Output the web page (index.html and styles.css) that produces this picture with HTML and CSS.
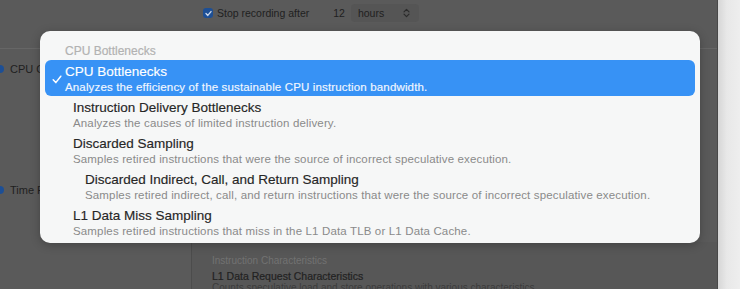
FILE: index.html
```html
<!DOCTYPE html>
<html lang="en">
<head>
    <meta charset="UTF-8">
    <meta name="viewport" content="width=device-width, initial-scale=1.0">
    <title>Recording Options</title>
    <link rel="stylesheet" href="styles.css">
</head>
<body>
    <div class="window">
        <div class="main">
            <!-- Toolbar behind the menu -->
            <div class="toolbar">
                <span class="check-box">
                    <svg width="9" height="9" viewBox="0 0 9 9"><path d="M2 4.6 L3.8 6.4 L7 2.6" fill="none" stroke="#c9d6ea" stroke-width="1.4" stroke-linecap="round" stroke-linejoin="round"/></svg>
                </span>
                <span class="toolbar-label">Stop recording after</span>
                <span class="toolbar-value">12</span>
                <span class="unit-select">
                    hours
                    <svg width="7" height="10" viewBox="0 0 7 10"><path d="M1 3.8 L3.5 1.3 L6 3.8 M1 6.2 L3.5 8.7 L6 6.2" fill="none" stroke="#2a2a2a" stroke-width="1.2" stroke-linecap="round" stroke-linejoin="round"/></svg>
                </span>
            </div>

            <div class="content">
                <div class="options">
                    <div class="option option-cpu"><span class="radio"></span><span class="option-label">CPU C</span></div>
                    <div class="option option-time"><span class="radio"></span><span class="option-label">Time P</span></div>
                </div>
                <div class="detail">
                    <div class="detail-panel">
                        <div class="detail-heading">Instruction Characteristics</div>
                        <div class="detail-title">L1 Data Request Characteristics</div>
                        <div class="detail-text">Counts speculative load and store operations with various characteristics.</div>
                    </div>
                </div>
            </div>

            <!-- Mode menu -->
            <div class="menu">
                <div class="menu-header">CPU Bottlenecks</div>
                <div class="menu-item selected">
                    <span class="menu-check">
                        <svg width="10" height="9" viewBox="0 0 10 9"><path d="M1.2 4.8 L3.8 7.6 L8.8 1.2" fill="none" stroke="#ffffff" stroke-width="1.5" stroke-linecap="round" stroke-linejoin="round"/></svg>
                    </span>
                    <div class="item-title">CPU Bottlenecks</div>
                    <div class="item-desc">Analyzes the efficiency of the sustainable CPU instruction bandwidth.</div>
                </div>
                <div class="menu-item">
                    <div class="item-title">Instruction Delivery Bottlenecks</div>
                    <div class="item-desc">Analyzes the causes of limited instruction delivery.</div>
                </div>
                <div class="menu-item">
                    <div class="item-title">Discarded Sampling</div>
                    <div class="item-desc">Samples retired instructions that were the source of incorrect speculative execution.</div>
                </div>
                <div class="menu-item sub-item">
                    <div class="item-title">Discarded Indirect, Call, and Return Sampling</div>
                    <div class="item-desc">Samples retired indirect, call, and return instructions that were the source of incorrect speculative execution.</div>
                </div>
                <div class="menu-item">
                    <div class="item-title">L1 Data Miss Sampling</div>
                    <div class="item-desc">Samples retired instructions that miss in the L1 Data TLB or L1 Data Cache.</div>
                </div>
            </div>
        </div>
        <div class="side"></div>
    </div>
</body>
</html>
```

FILE: styles.css
```css
* {
    margin: 0;
    padding: 0;
    box-sizing: border-box;
}

body {
    font-family: "Liberation Sans", Arial, sans-serif;
    background-color: #5a5a5a;
    width: 740px;
    height: 289px;
    overflow: hidden;
}

.window {
    display: flex;
    height: 289px;
}

.main {
    position: relative;
    width: 718px;
    height: 289px;
    background-color: #5a5a5a;
    border-right: 1px solid #484848;
    overflow: hidden;
}

.side {
    flex: 1;
    background: linear-gradient(to right, #d6d6d6, #e8e8e8 40%, #eeeeee);
}

/* Toolbar */
.toolbar {
    display: flex;
    align-items: center;
    height: 26px;
    padding-left: 203px;
    font-size: 10.5px;
    color: #1f1f1f;
}

.check-box {
    width: 10px;
    height: 10px;
    border-radius: 3px;
    background-color: #1d4f95;
    display: flex;
    align-items: center;
    justify-content: center;
    margin-right: 4px;
}

.toolbar-label {
    margin-right: 24px;
}

.toolbar-value {
    margin-right: 6px;
}

.unit-select {
    display: flex;
    align-items: center;
    justify-content: space-between;
    width: 68px;
    height: 18px;
    padding: 0 9px 0 7px;
    border-radius: 4px;
    background-color: #555555;
}

/* Content behind the menu */
.content {
    display: flex;
    border-top: 1px solid #666666;
    margin-top: 22px;
    height: 241px;
}

.options {
    width: 191px;
    font-size: 11px;
    color: #1f1f1f;
}

.option {
    display: flex;
    align-items: center;
    gap: 6px;
    margin-left: -4px;
}

.option-label {
    white-space: nowrap;
}

.option-cpu {
    margin-top: 14px;
}

.option-time {
    margin-top: 109px;
}

.radio {
    width: 8px;
    height: 8px;
    border-radius: 50%;
    background-color: #1d4f95;
}

.detail {
    flex: 1;
    padding-top: 193px;
}

.detail-panel {
    height: 60px;
    background-color: #575757;
    border-left: 1px solid #4c4c4c;
    padding: 13px 20px 0;
}

.detail-heading {
    font-size: 10px;
    color: #727272;
    margin-bottom: 4px;
}

.detail-title {
    font-size: 10.5px;
    color: #222222;
    -webkit-text-stroke: 0.2px #222222;
}

.detail-text {
    font-size: 10px;
    color: #3c3c3c;
    white-space: nowrap;
}

/* Menu */
.menu {
    position: absolute;
    left: 40px;
    top: 31px;
    width: 660px;
    height: 212px;
    padding: 0 5px 3px;
    border-radius: 10px;
    background-color: #f6f7f7;
    box-shadow: 0 2px 10px rgba(0, 0, 0, 0.25);
}

.menu-header {
    height: 29px;
    padding: 13px 0 0 20px;
    font-size: 12px;
    color: #b2b2b2;
    -webkit-text-stroke: 0.2px #b2b2b2;
}

.menu-item {
    position: relative;
    height: 36px;
    padding: 3px 0 0 28px;
    border-radius: 6px;
}

.menu-item.selected {
    padding-left: 20px;
    background-color: #3792f5;
}

.menu-item.sub-item {
    padding-left: 40px;
}

.menu-check {
    position: absolute;
    left: 7px;
    top: 15px;
    display: flex;
}

.item-title {
    font-size: 13.5px;
    line-height: 17px;
    color: #262626;
    -webkit-text-stroke: 0.15px #262626;
}

.item-desc {
    font-size: 11.5px;
    line-height: 14px;
    letter-spacing: 0.15px;
    color: #8a8a8a;
    white-space: nowrap;
}

.selected .item-title {
    color: #ffffff;
    -webkit-text-stroke: 0.15px #ffffff;
}

.selected .item-desc {
    color: #f2f7ff;
    -webkit-text-stroke: 0.15px #f2f7ff;
}
```
